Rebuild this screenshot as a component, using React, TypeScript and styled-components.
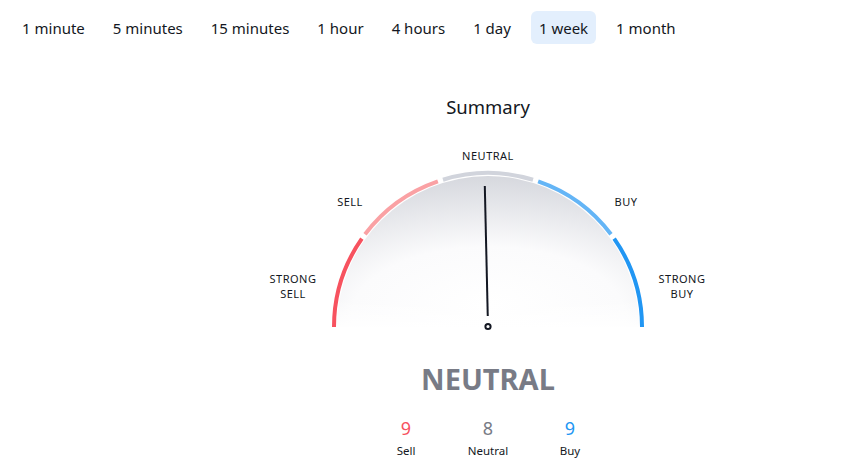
import React from "react";
import styled, { createGlobalStyle } from "styled-components";

const FONT = `"Noto Sans", "Open Sans", sans-serif`;

const GlobalStyle = createGlobalStyle`
  html, body { margin: 0; padding: 0; background: #ffffff; }
  body { font-family: ${FONT}; color: #131722; }
`;

const Page = styled.div`
  width: 857px;
  height: 468px;
  overflow: hidden;
`;

const Tabs = styled.div`
  display: flex;
  align-items: center;
  gap: 12px;
  padding: 11px 0 0 14px;
`;

const Tab = styled.button<{ $active?: boolean }>`
  height: 33px;
  padding: 0 8px;
  border: none;
  border-radius: 6px;
  background: ${(p) => (p.$active ? "#e3effd" : "transparent")};
  color: #131722;
  font-family: ${FONT};
  font-size: 15px;
  cursor: pointer;
`;

const Summary = styled.section`
  display: flex;
  flex-direction: column;
  align-items: center;
  padding-left: 119px;
  margin-top: 51px;
`;

const Title = styled.div`
  font-size: 18.5px;
  line-height: 24px;
  color: #131722;
`;

const GaugeWrap = styled.div`
  position: relative;
  width: 460px;
  height: 195px;
  margin-top: 24px;
`;

const GaugeSvg = styled.svg`
  display: block;
`;

const GaugeLabel = styled.div<{ $x: number; $y: number }>`
  position: absolute;
  left: ${(p) => p.$x}px;
  top: ${(p) => p.$y}px;
  transform: translateX(-50%);
  font-size: 11px;
  line-height: 15px;
  letter-spacing: 0.5px;
  text-align: center;
  white-space: nowrap;
  color: #131722;
`;

const Verdict = styled.div`
  margin-top: 24px;
  font-size: 29px;
  line-height: 34px;
  font-weight: 700;
  color: #787b86;
`;

const Counts = styled.div`
  display: grid;
  grid-template-columns: repeat(3, 82px);
  margin-top: 21px;
`;

const Count = styled.div`
  display: flex;
  flex-direction: column;
  align-items: center;
`;

const CountValue = styled.div<{ $color: string }>`
  font-size: 18px;
  line-height: 22px;
  color: ${(p) => p.$color};
`;

const CountLabel = styled.div`
  margin-top: 4px;
  font-size: 11.5px;
  line-height: 16px;
  color: #131722;
`;

const CX = 230;
const CY = 184;
const R = 154;
const RAD = Math.PI / 180;

function pt(r: number, deg: number) {
  return [CX + r * Math.cos(deg * RAD), CY - r * Math.sin(deg * RAD)];
}

function arc(r: number, from: number, to: number) {
  const [x1, y1] = pt(r, from);
  const [x2, y2] = pt(r, to);
  return `M ${x1.toFixed(2)} ${y1.toFixed(2)} A ${r} ${r} 0 0 1 ${x2.toFixed(2)} ${y2.toFixed(2)}`;
}

const segments = [
  { from: 180, to: 145, color: "#f7525f" },
  { from: 143, to: 109, color: "#faa1a4" },
  { from: 107, to: 73, color: "#d1d4dc" },
  { from: 71, to: 37, color: "#64b5f6" },
  { from: 35, to: 0, color: "#2196f3" },
];

const labels = [
  { x: 230, y: 5, lines: ["NEUTRAL"] },
  { x: 92, y: 51, lines: ["SELL"] },
  { x: 368, y: 51, lines: ["BUY"] },
  { x: 35, y: 128, lines: ["STRONG", "SELL"] },
  { x: 424, y: 128, lines: ["STRONG", "BUY"] },
];

const tabs = ["1 minute", "5 minutes", "15 minutes", "1 hour", "4 hours", "1 day", "1 week", "1 month"];

function Gauge() {
  const needleAngle = 91.3;
  const [nx, ny] = pt(141, needleAngle);
  const [bx, by] = pt(11, needleAngle);
  return (
    <GaugeWrap>
      <GaugeSvg width={460} height={195} viewBox="0 0 460 195">
        <defs>
          <radialGradient id="face" cx="50%" cy="100%" r="100%" fx="50%" fy="85%">
            <stop offset="0%" stopColor="#ffffff" />
            <stop offset="45%" stopColor="#fbfbfc" />
            <stop offset="100%" stopColor="#d6d8de" />
          </radialGradient>
          <linearGradient id="fade" x1="0" y1="0" x2="0" y2="1">
            <stop offset="0.82" stopColor="#ffffff" stopOpacity="0" />
            <stop offset="1" stopColor="#ffffff" stopOpacity="0.9" />
          </linearGradient>
        </defs>
        <path d={`${arc(151, 180, 0)} Z`} fill="url(#face)" />
        <path d={`${arc(151, 180, 0)} Z`} fill="url(#fade)" />
        {segments.map((s) => (
          <path key={s.color} d={arc(R, s.from, s.to)} stroke={s.color} strokeWidth={4} fill="none" />
        ))}
        <line x1={bx} y1={by} x2={nx} y2={ny} stroke="#131722" strokeWidth={2} />
        <circle cx={CX} cy={CY - 0.5} r={2.6} fill="#ffffff" stroke="#131722" strokeWidth={2} />
      </GaugeSvg>
      {labels.map((l) => (
        <GaugeLabel key={l.lines.join(" ")} $x={l.x} $y={l.y}>
          {l.lines.map((line, i) => (
            <React.Fragment key={line}>
              {i > 0 && <br />}
              {line}
            </React.Fragment>
          ))}
        </GaugeLabel>
      ))}
    </GaugeWrap>
  );
}

export default function App() {
  return (
    <Page>
      <GlobalStyle />
      <Tabs>
        {tabs.map((t) => (
          <Tab key={t} $active={t === "1 week"}>
            {t}
          </Tab>
        ))}
      </Tabs>
      <Summary>
        <Title>Summary</Title>
        <Gauge />
        <Verdict>NEUTRAL</Verdict>
        <Counts>
          <Count>
            <CountValue $color="#f7525f">9</CountValue>
            <CountLabel>Sell</CountLabel>
          </Count>
          <Count>
            <CountValue $color="#787b86">8</CountValue>
            <CountLabel>Neutral</CountLabel>
          </Count>
          <Count>
            <CountValue $color="#2196f3">9</CountValue>
            <CountLabel>Buy</CountLabel>
          </Count>
        </Counts>
      </Summary>
    </Page>
  );
}
